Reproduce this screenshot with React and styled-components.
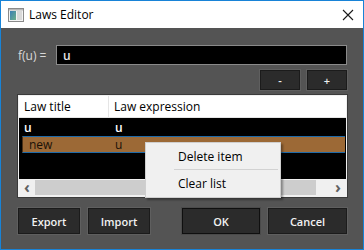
import React from 'react';
import styled, { createGlobalStyle } from 'styled-components';

const GlobalStyle = createGlobalStyle`
    html, body {
        margin: 0;
        padding: 0;
        background: #ffffff;
    }
    * {
        box-sizing: border-box;
    }
`;

const rows = [
    { title: 'u', expr: 'u', selected: false },
    { title: 'new', expr: 'u', selected: true },
];

const App = () => {
    return (
        <>
            <GlobalStyle />
            <Window>
                <TitleBar>
                    <AppIcon width="16" height="14" viewBox="0 0 16 14">
                        <defs>
                            <linearGradient id="ig" x1="0" y1="0" x2="1" y2="1">
                                <stop offset="0" stopColor="#3a7fb5" />
                                <stop offset="1" stopColor="#6fb08a" />
                            </linearGradient>
                        </defs>
                        <rect x="0.5" y="0.5" width="15" height="13" fill="#f4f4f4" stroke="#8a8a8a" />
                        <rect x="2" y="3" width="6" height="9" fill="url(#ig)" />
                        <rect x="9" y="3" width="5" height="9" fill="#d9d9d9" />
                        <rect x="1" y="1" width="14" height="1.5" fill="#b8b8b8" />
                    </AppIcon>
                    <Title>Laws Editor</Title>
                    <CloseIcon width="12" height="12" viewBox="0 0 12 12">
                        <path d="M1 1 L11 11 M11 1 L1 11" stroke="#1a1a1a" strokeWidth="1.1" />
                    </CloseIcon>
                </TitleBar>

                <Body>
                    <FormulaRow>
                        <Label>f(u) =</Label>
                        <Input defaultValue="u" />
                    </FormulaRow>

                    <SmallButtons>
                        <SmallButton>-</SmallButton>
                        <SmallButton>+</SmallButton>
                    </SmallButtons>

                    <Table>
                        <HeaderRow>
                            <HeaderCell $width={90}>Law title</HeaderCell>
                            <HeaderCell>Law expression</HeaderCell>
                        </HeaderRow>
                        <Rows>
                            {rows.map((r, i) => (
                                <Row key={i} $selected={r.selected}>
                                    <Cell $width={r.selected ? 86 : 91} $bold={!r.selected}>{r.title}</Cell>
                                    <Cell $bold={!r.selected}>{r.expr}</Cell>
                                </Row>
                            ))}
                        </Rows>
                        <ScrollBar>
                            <ArrowBox>&#8249;</ArrowBox>
                            <Thumb />
                            <Track />
                            <ArrowBox>&#8250;</ArrowBox>
                        </ScrollBar>

                        <Menu>
                            <MenuItem>Delete item</MenuItem>
                            <MenuSeparator />
                            <MenuItem>Clear list</MenuItem>
                        </Menu>
                    </Table>

                    <Footer>
                        <ButtonGroup>
                            <DialogButton $width={62}>Export</DialogButton>
                            <DialogButton $width={62}>Import</DialogButton>
                        </ButtonGroup>
                        <ButtonGroup>
                            <DialogButton $width={78} $default>OK</DialogButton>
                            <DialogButton $width={79}>Cancel</DialogButton>
                        </ButtonGroup>
                    </Footer>
                </Body>
            </Window>
        </>
    );
};

const Window = styled.div`
    width: 364px;
    height: 250px;
    border: 1px solid #1883d7;
    display: flex;
    flex-direction: column;
    font-family: 'Open Sans', 'Noto Sans', sans-serif;
    font-size: 11.5px;
    overflow: hidden;
`;

const TitleBar = styled.div`
    height: 27px;
    flex: none;
    background: #ffffff;
    display: flex;
    align-items: center;
    padding: 0 9px 0 7px;
`;

const AppIcon = styled.svg`
    flex: none;
    margin-right: 5px;
`;

const Title = styled.div`
    flex: 1;
    color: #000;
    font-size: 12px;
`;

const CloseIcon = styled.svg`
    flex: none;
`;

const Body = styled.div`
    flex: 1;
    background: #545454;
    padding: 17px 16px 0 17px;
    display: flex;
    flex-direction: column;
`;

const FormulaRow = styled.div`
    display: flex;
    align-items: center;
    height: 20px;
`;

const Label = styled.div`
    width: 38px;
    color: #d8d8d8;
    font-size: 12px;
`;

const Input = styled.input`
    flex: 1;
    height: 20px;
    background: #000;
    border: 1px solid #8a8a8a;
    color: #e6e6e6;
    font-family: inherit;
    font-size: 12px;
    font-weight: 600;
    padding: 0 6px;
    outline: none;
`;

const SmallButtons = styled.div`
    display: flex;
    justify-content: flex-end;
    gap: 7px;
    margin-top: 5px;
`;

const SmallButton = styled.div`
    width: 40px;
    height: 20px;
    background: #2b2b2b;
    border: 1px solid #1b1b1b;
    box-shadow: 0 0 0 1px #5f5f5f;
    color: #f0f0f0;
    font-size: 11px;
    font-weight: 600;
    display: flex;
    align-items: center;
    justify-content: center;
`;

const Table = styled.div`
    position: relative;
    margin-top: 5px;
    height: 102px;
    background: #000;
    border: 1px solid #f0f0f0;
    box-shadow: 0 0 0 1px #3a3a3a;
    display: flex;
    flex-direction: column;
`;

const HeaderRow = styled.div`
    height: 22px;
    background: #ffffff;
    display: flex;
    border-bottom: 1px solid #e5e5e5;
`;

const HeaderCell = styled.div`
    width: ${(p) => (p.$width ? `${p.$width}px` : 'auto')};
    flex: ${(p) => (p.$width ? 'none' : '1')};
    color: #000;
    font-size: 12px;
    padding-left: 5px;
    display: flex;
    align-items: center;
    border-right: ${(p) => (p.$width ? '1px solid #e5e5e5' : 'none')};
`;

const Rows = styled.div`
    flex: 1;
    padding-top: 1px;
`;

const Row = styled.div`
    height: 17px;
    display: flex;
    align-items: center;
    margin: ${(p) => (p.$selected ? '0 1px 0 3px' : '0')};
    background: ${(p) => (p.$selected ? '#9c6936' : 'transparent')};
    border-top: ${(p) => (p.$selected ? '1px solid #1f6aa8' : '1px solid transparent')};
    border-bottom: ${(p) => (p.$selected ? '1px solid #1f6aa8' : '1px solid transparent')};
    border-left: ${(p) => (p.$selected ? '1px solid #4a3118' : 'none')};
    color: ${(p) => (p.$selected ? '#1a1108' : '#ffffff')};
`;

const Cell = styled.div`
    width: ${(p) => (p.$width ? `${p.$width}px` : 'auto')};
    flex: ${(p) => (p.$width ? 'none' : '1')};
    padding-left: ${(p) => (p.$bold ? '5px' : '6px')};
    font-size: 12px;
    font-weight: ${(p) => (p.$bold ? 600 : 400)};
`;

const ScrollBar = styled.div`
    height: 17px;
    background: #f0f0f0;
    display: flex;
    align-items: stretch;
`;

const ArrowBox = styled.div`
    width: 16px;
    flex: none;
    display: flex;
    align-items: center;
    justify-content: center;
    color: #606060;
    font-size: 16px;
    font-weight: 700;
    line-height: 1;
    padding-bottom: 2px;
`;

const Thumb = styled.div`
    width: 281px;
    margin: 1px 0;
    background: #cdcdcd;
`;

const Track = styled.div`
    flex: 1;
`;

const Menu = styled.div`
    position: absolute;
    left: 126px;
    top: 46px;
    width: 136px;
    background: #f0f0f0;
    border: 1px solid #cfcfcf;
    box-shadow: 2px 2px 2px rgba(0, 0, 0, 0.35);
    padding: 2px 2px 3px 2px;
    display: flex;
    flex-direction: column;
`;

const MenuItem = styled.div`
    height: 22px;
    padding-left: 30px;
    display: flex;
    align-items: center;
    color: #000;
    font-size: 12px;
`;

const MenuSeparator = styled.div`
    height: 1px;
    margin: 2px 0 2px 26px;
    background: #d2d2d2;
`;

const Footer = styled.div`
    display: flex;
    justify-content: space-between;
    margin-top: 11px;
`;

const ButtonGroup = styled.div`
    display: flex;
    gap: 8px;
`;

const DialogButton = styled.div`
    width: ${(p) => p.$width}px;
    height: 26px;
    background: #2b2b2b;
    border: 1px solid ${(p) => (p.$default ? '#0f0f0f' : '#1b1b1b')};
    box-shadow: 0 0 0 1px ${(p) => (p.$default ? '#4a4a4a' : '#5f5f5f')};
    color: #f2f2f2;
    font-size: 11px;
    font-weight: 600;
    display: flex;
    align-items: center;
    justify-content: center;
`;

export default App;
